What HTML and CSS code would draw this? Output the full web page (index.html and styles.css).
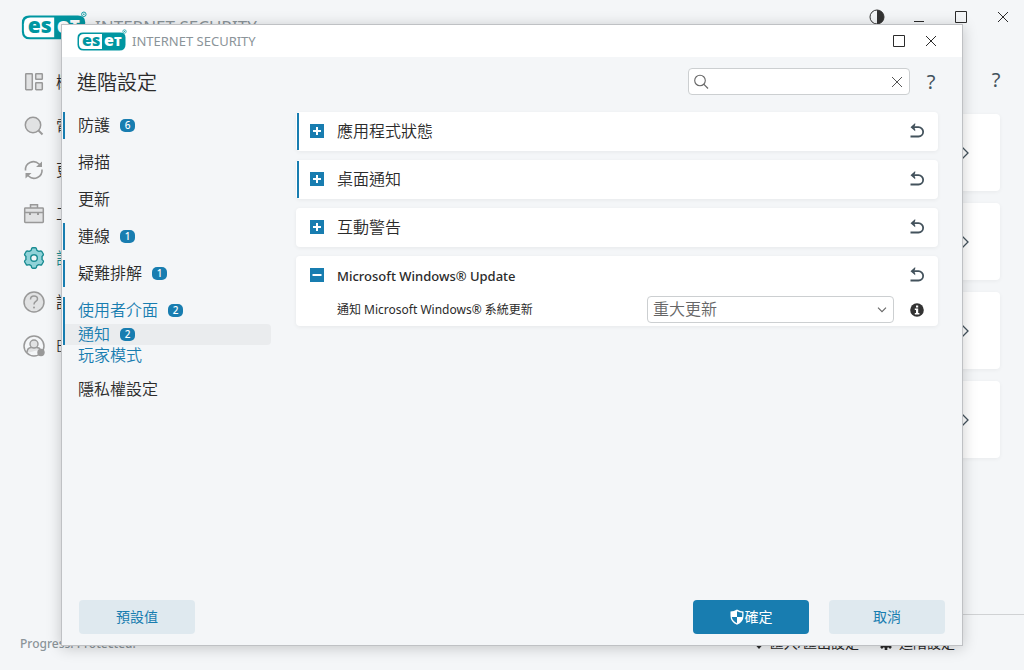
FILE: index.html
```html
<!DOCTYPE html>
<html lang="zh-Hant">
<head>
<meta charset="utf-8">
<meta name="viewport" content="width=device-width, initial-scale=1">
<title>ESET Internet Security</title>
<link rel="stylesheet" href="styles.css">
</head>
<body>
<svg class="defs" aria-hidden="true">
  <symbol id="maximize" viewBox="0 0 12 12"><path d="M.5.5h11v11H.5z" fill="none" stroke="currentColor"/></symbol>
  <symbol id="close" viewBox="0 0 12 12"><path d="M1 1l10 10M11 1L1 11" fill="none" stroke="currentColor"/></symbol>
  <symbol id="undo" viewBox="0 0 16 16"><path d="M3 4.200h6.500a4.600 4.600 0 0 1 0 9.300H1.500" fill="none" stroke="currentColor" stroke-width="1.800"/><path d="M1.500 4.200L6.200 0v2L5 4.200l1.200 2v2z" fill="currentColor"/></symbol>
  <symbol id="plus" viewBox="0 0 14 14"><path d="M0 0h14v14H0z" fill="#187db0"/><path d="M7 3v8M3 7h8" stroke="#fff" stroke-width="2"/></symbol>
  <symbol id="minus" viewBox="0 0 14 14"><path d="M0 0h14v14H0z" fill="#187db0"/><path d="M2.500 7h9" stroke="#fff" stroke-width="2"/></symbol>
  <symbol id="chevron" viewBox="0 0 10 16"><path d="M1 1l7 7-7 7" fill="none" stroke="currentColor" stroke-width="1.300"/></symbol>
</svg>

<div class="window">
  <header class="window-head">
    <div class="brand brand-large">
      <svg class="logo" viewBox="0 0 52 22" role="img" aria-label="ESET">
        <path d="M6 3.500H43Q48.500 3.500 48.500 8.500V15.500Q48.500 21.500 42.500 21.500H6.500Q0.500 21.500 0.500 15.500V9Q0.500 3.500 6 3.500Z" fill="#0096a1"/>
        <path d="M7 5H25V20H7Q2 20 2 15V10Q2 5 7 5Z" fill="#fff"/>
        <text x="5" y="17" class="logo-text" fill="#0096a1">es</text>
        <text x="27" y="17" class="logo-text" fill="#fff">e<tspan class="logo-cap">T</tspan></text>
        <circle cx="47.500" cy="2.500" r="1.700" fill="none" stroke="#0096a1" stroke-width=".7"/>
        <circle cx="47.500" cy="2.500" r=".6" fill="#0096a1"/>
      </svg>
      <span>INTERNET SECURITY</span>
    </div>
    <div class="controls">
      <button type="button" aria-label="對比"><svg class="icon-16" viewBox="0 0 16 16"><circle cx="8" cy="8" r="7" fill="none" stroke="#333"/><path d="M8 1a7 7 0 0 1 0 14z" fill="#333"/></svg></button>
      <button type="button" aria-label="最小化"><svg class="icon-12" viewBox="0 0 12 12"><path d="M1 10.500h10" stroke="currentColor"/></svg></button>
      <button type="button" aria-label="最大化"><svg class="icon-12"><use href="#maximize"/></svg></button>
      <button type="button" aria-label="關閉"><svg class="icon-12"><use href="#close"/></svg></button>
    </div>
  </header>
  <div class="window-main">
    <div class="side">
      <nav class="main-nav" aria-label="主功能表">
        <a href="#"><svg class="nav-icon" viewBox="0 0 24 24"><g fill="#e1e2e3" stroke="#999" stroke-width="1.500"><rect x="3.700" y="3.700" width="6.600" height="16" rx=".6"/><rect x="13.700" y="3.700" width="6.600" height="5.600" rx=".6"/><rect x="13.700" y="12.700" width="6.600" height="7" rx=".6"/></g></svg>概觀</a>
        <a href="#"><svg class="nav-icon" viewBox="0 0 24 24"><circle cx="11" cy="11" r="7.700" fill="#e1e2e3" stroke="#999" stroke-width="1.500"/><path d="M16.500 16.500l4 4" stroke="#999" stroke-width="2"/></svg>電腦掃描</a>
        <a href="#"><svg class="nav-icon" viewBox="0 0 24 24"><g fill="none" stroke="#999" stroke-width="1.600"><path d="M3.500 12.500a8 8 0 0 1 13.500-6.500l2 2"/><path d="M20 11.500a8 8 0 0 1-13.500 6.500l-2-2"/></g><path d="M20 3.500v5.500h-6zM3.500 20.500V15h6z" fill="#999"/></svg>更新</a>
        <a href="#"><svg class="nav-icon" viewBox="0 0 24 24"><g fill="#e1e2e3" stroke="#999" stroke-width="1.500"><path d="M8.500 6V2.700h7V6"/><rect x="2.700" y="6" width="18.600" height="14.500" rx=".7"/><path d="M3 10.500h18"/></g><path d="M7 11h2v2H7zM15 11h2v2h-2z" fill="#999"/></svg>工具</a>
        <a href="#" class="current"><svg class="nav-icon" viewBox="0 0 24 24"><path d="M9.200 4.200Q9.500 1.800 10.500 1.800h3q1 0 1.300 2.400 1 .7 2 1.100 2.300-.8 3 .2l1.500 2.500q.5 1-1.300 2.500.2 1.500 0 3 1.800 1.500 1.300 2.500l-1.500 2.500q-.7 1-3 .2-1 .4-2 1.100-.3 2.400-1.300 2.400h-3q-1 0-1.300-2.400-1-.7-2-1.100-2.300.8-3-.2l-1.500-2.500q-.5-1 1.300-2.500-.2-1.500 0-3Q2.200 9 2.700 8l1.500-2.500q.7-1 3-.2 1-.4 2-1.100z" fill="#90d2d8" stroke="#1a8c92" stroke-width="1.400" stroke-linejoin="round"/><circle cx="12" cy="12" r="3.300" fill="#f4f6f8" stroke="#1a8c92" stroke-width="1.400"/></svg>設定</a>
        <a href="#"><svg class="nav-icon" viewBox="0 0 24 24"><circle cx="12" cy="12" r="10" fill="#e1e2e3" stroke="#999" stroke-width="1.500"/><path d="M8.500 9.500q0-3.500 3.500-3.500t3.500 3q0 1.500-2 2.700Q12 12.700 12 14.500" fill="none" stroke="#999" stroke-width="1.500"/><circle cx="12" cy="17.500" r="1" fill="#999"/></svg>說明及支援</a>
        <a href="#"><svg class="nav-icon" viewBox="0 0 24 24"><circle cx="12" cy="12" r="10" fill="#f4f6f8" stroke="#999" stroke-width="1.500"/><g fill="#e1e2e3" stroke="#999" stroke-width="1.400"><path d="M5 19q0-5.500 4.500-5.500h5q3 0 4 2"/><circle cx="12" cy="10" r="4"/></g><circle cx="19" cy="18.500" r="3.700" fill="#999"/></svg>ESET HOME 帳戶</a>
      </nav>
      <p class="slogan">Progress. Protected.</p>
    </div>
    <div class="content">
      <a class="help" href="#" aria-label="說明">?</a>
      <div class="tiles">
        <button type="button" class="tile" aria-label="電腦防護"><svg><use href="#chevron"/></svg></button>
        <button type="button" class="tile" aria-label="網際網路防護"><svg><use href="#chevron"/></svg></button>
        <button type="button" class="tile" aria-label="網路防護"><svg><use href="#chevron"/></svg></button>
        <button type="button" class="tile" aria-label="安全性工具"><svg><use href="#chevron"/></svg></button>
      </div>
      <footer class="window-foot">
        <a href="#"><svg class="icon-14" viewBox="0 0 14 14"><path d="M4 10V3M9 1v9" stroke="currentColor" stroke-width="1.500"/><path d="M4 0l3 4H1zM9 13L5.500 9h7z" fill="currentColor"/></svg>匯入/匯出設定</a>
        <a href="#"><svg class="icon-14" viewBox="0 0 14 14"><circle cx="7" cy="7" r="3.500" fill="none" stroke="currentColor" stroke-width="3"/><path d="M7 0v3M7 11v3M0 7h3M11 7h3M2 2l2 2M10 10l2 2M12 2l-2 2M4 10l-2 2" stroke="currentColor" stroke-width="2.600"/></svg>進階設定</a>
      </footer>
    </div>
  </div>
</div>

<section class="dialog" role="dialog" aria-labelledby="dialog-title">
  <header class="titlebar">
    <div class="brand">
      <svg class="logo" viewBox="0 0 52 22" role="img" aria-label="ESET">
        <path d="M6 3.500H43Q48.500 3.500 48.500 8.500V15.500Q48.500 21.500 42.500 21.500H6.500Q0.500 21.500 0.500 15.500V9Q0.500 3.500 6 3.500Z" fill="#0096a1"/>
        <path d="M7 5H25V20H7Q2 20 2 15V10Q2 5 7 5Z" fill="#fff"/>
        <text x="5" y="17" class="logo-text" fill="#0096a1">es</text>
        <text x="27" y="17" class="logo-text" fill="#fff">e<tspan class="logo-cap">T</tspan></text>
        <circle cx="47.500" cy="2.500" r="1.700" fill="none" stroke="#0096a1" stroke-width=".7"/>
        <circle cx="47.500" cy="2.500" r=".6" fill="#0096a1"/>
      </svg>
      <span>INTERNET SECURITY</span>
    </div>
    <div class="controls">
      <button type="button" aria-label="最大化"><svg class="icon-12"><use href="#maximize"/></svg></button>
      <button type="button" aria-label="關閉"><svg class="icon-12"><use href="#close"/></svg></button>
    </div>
  </header>
  <div class="dialog-head">
    <h1 id="dialog-title">進階設定</h1>
    <div class="search">
      <svg class="icon-16" viewBox="0 0 16 16"><circle cx="7" cy="6.500" r="5.300" fill="none" stroke="#666" stroke-width="1.100"/><path d="M10.700 10.200l4.300 4.300" stroke="#666" stroke-width="1.200"/></svg>
      <input type="text" aria-label="搜尋">
      <button type="button" aria-label="清除"><svg class="icon-12"><use href="#close"/></svg></button>
    </div>
    <a class="help" href="#" aria-label="說明">?</a>
  </div>
  <div class="dialog-body">
    <nav class="tree" aria-label="設定分類">
      <a class="changed" href="#">防護<span class="badge">6</span></a>
      <a href="#">掃描</a>
      <a href="#">更新</a>
      <a class="changed" href="#">連線<span class="badge">1</span></a>
      <a class="changed" href="#">疑難排解<span class="badge">1</span></a>
      <div class="group">
        <a class="changed" href="#">使用者介面<span class="badge">2</span></a>
        <a class="sub changed selected" href="#" aria-current="page">通知<span class="badge">2</span></a>
        <a class="sub" href="#">玩家模式</a>
      </div>
      <a href="#">隱私權設定</a>
    </nav>
    <main class="panels">
      <section class="panel marked"><div class="panel-row">
        <button type="button" aria-label="展開"><svg class="icon-14"><use href="#plus"/></svg></button><h2>應用程式狀態</h2>
        <button type="button" aria-label="還原"><svg class="icon-16"><use href="#undo"/></svg></button></div></section>
      <section class="panel marked"><div class="panel-row">
        <button type="button" aria-label="展開"><svg class="icon-14"><use href="#plus"/></svg></button><h2>桌面通知</h2>
        <button type="button" aria-label="還原"><svg class="icon-16"><use href="#undo"/></svg></button></div></section>
      <section class="panel"><div class="panel-row">
        <button type="button" aria-label="展開"><svg class="icon-14"><use href="#plus"/></svg></button><h2>互動警告</h2>
        <button type="button" aria-label="還原"><svg class="icon-16"><use href="#undo"/></svg></button></div></section>
      <section class="panel"><div class="panel-row">
        <button type="button" aria-label="收合"><svg class="icon-14"><use href="#minus"/></svg></button><h2 class="latin">Microsoft Windows® Update</h2>
        <button type="button" aria-label="還原"><svg class="icon-16"><use href="#undo"/></svg></button></div>
        <div class="setting">
          <label for="update-level">通知 Microsoft Windows® 系統更新</label>
          <div class="select">
            <select id="update-level"><option>重大更新</option></select>
            <svg viewBox="0 0 10 6"><path d="M1 .7l4 4 4-4" fill="none" stroke="#666" stroke-width="1.100"/></svg>
          </div>
          <button type="button" aria-label="資訊"><svg class="icon-14" viewBox="0 0 14 14"><circle cx="7" cy="7" r="6.800" fill="#333"/><path d="M6 2.500h2.200v2H6zM4.800 5.500h3.400v4.500h1.200v1.500H4.800V10H6V7H4.800z" fill="#fff"/></svg></button>
        </div>
      </section>
    </main>
  </div>
  <footer class="actions">
    <button type="button" class="btn">預設值</button>
    <div class="actions-end">
      <button type="button" class="btn primary"><svg class="icon-14" viewBox="0 0 14 16"><path d="M7 .5Q10 2.500 13.500 2.500V7q0 6-6.500 8.700Q.5 13 .5 7V2.500Q4 2.500 7 .5z" fill="#fff"/><path d="M7 2.200Q9.500 3.600 12.200 3.800V8H7zM1.800 8H7v6.200Q2.500 12 1.800 8z" fill="#187db0"/></svg>確定</button>
      <button type="button" class="btn">取消</button>
    </div>
  </footer>
</section>
</body>
</html>
```
FILE: styles.css
```css
* { box-sizing: border-box; }

body {
  margin: 0;
  position: relative;
  min-height: 100vh;
  display: flex;
  background: #f4f6f8;
  color: #2b2b2b;
  font-family: "Noto Sans", "Noto Sans CJK TC", sans-serif;
  font-size: 16px;
  font-weight: 350;
  line-height: 20px;
}

h1, h2, p { margin: 0; font-weight: 350; }
a { color: inherit; text-decoration: none; }
svg { display: block; flex: none; }
button {
  display: flex;
  align-items: center;
  justify-content: center;
  padding: 0;
  border: 0;
  background: none;
  color: inherit;
  font: inherit;
}

.defs { position: absolute; width: 0; height: 0; }
.icon-12 { width: 12px; height: 12px; }
.icon-14 { width: 14px; height: 14px; }
.icon-16 { width: 16px; height: 16px; }

.brand {
  display: flex;
  align-items: center;
  gap: 3px;
  color: #8b9499;
  font-size: 13px;
  font-weight: 400;
}
.brand .logo { width: 52px; height: 22px; margin-top: -2px; }
.brand-large { gap: 5px; font-size: 17px; }
.brand-large .logo { width: 69px; height: 29px; }
.logo-text { font: 900 16px "Noto Sans", sans-serif; }
.logo-cap { font-size: 13px; }

.help { color: #43525c; font-size: 20px; font-weight: 400; text-align: center; }

/* Main window */
.window { flex: 1; display: flex; flex-direction: column; }
.window-head {
  display: flex;
  align-items: flex-start;
  justify-content: space-between;
  height: 60px;
  padding: 13px 0 0 21px;
}
.window-head .controls { display: flex; margin-top: -6px; }
.window-head .controls button { width: 42px; height: 20px; }
.window-main { flex: 1; display: flex; }
.side {
  width: 220px;
  display: flex;
  flex-direction: column;
  justify-content: space-between;
  padding-bottom: 16px;
}
.main-nav a {
  display: flex;
  align-items: center;
  gap: 10px;
  height: 44px;
  padding-left: 22px;
}
.main-nav .current { color: #1a8c92; }
.nav-icon { width: 24px; height: 24px; }
.slogan { padding-left: 20px; color: #8b9499; font-size: 12px; font-weight: 500; }
.content { flex: 1; display: flex; flex-direction: column; }
.content .help { align-self: flex-end; width: 20px; height: 54px; margin-right: 18px; padding-top: 10px; }
.tiles { flex: 1; display: flex; flex-direction: column; gap: 12px; padding-right: 24px; }
.tile {
  justify-content: flex-end;
  height: 77px;
  padding-right: 30px;
  border-radius: 4px;
  background: #fff;
  color: #43525c;
  box-shadow: 0 1px 4px rgba(0, 0, 0, .05);
}
.tile svg { width: 10px; height: 16px; }
.window-foot {
  display: flex;
  align-items: center;
  justify-content: flex-end;
  gap: 20px;
  height: 56px;
  padding-right: 69px;
  border-top: 1px solid #d0d2d4;
  font-size: 14px;
  font-weight: 400;
}
.window-foot a { display: flex; align-items: center; gap: 6px; }

/* Settings dialog lying over the main window */
.dialog {
  position: absolute;
  inset: 24px 61px;
  display: flex;
  flex-direction: column;
  border: 1px solid #bfc1c4;
  background: #f4f6f8;
  box-shadow: 0 2px 14px rgba(0, 0, 0, .2);
}
.titlebar {
  display: flex;
  align-items: center;
  justify-content: space-between;
  height: 32px;
  padding: 0 15px;
  background: #fff;
}
.titlebar .controls { display: flex; }
.titlebar .controls button { width: 32px; height: 32px; }
.dialog-head {
  display: flex;
  align-items: center;
  height: 55px;
  padding: 0 19px 6px 15px;
}
h1 { flex: 1; padding-top: 2px; font-size: 20px; line-height: 28px; }
.search {
  display: flex;
  align-items: center;
  width: 222px;
  height: 27px;
  padding: 0 6px 0 4px;
  border: 1px solid #cccfd1;
  border-radius: 4px;
  background: #fff;
  color: #555;
}
.search input {
  flex: 1;
  min-width: 0;
  border: 0;
  outline: 0;
  background: none;
  font: inherit;
}
.dialog-head .help { width: 24px; margin-left: 9px; }

.dialog-body { flex: 1; display: flex; }
.tree { display: flex; flex-direction: column; gap: 10px; width: 234px; }
.tree a {
  display: flex;
  align-items: center;
  gap: 10px;
  height: 27px;
  margin: 0 25px 0 1px;
  padding: 0 0 2px 13px;
  border-left: 2px solid transparent;
}
.tree .changed { border-left-color: #187db0; }
.group { color: #187db0; }
.tree .sub { height: 21px; }
.tree .selected { border-radius: 0 4px 4px 0; background: #eaecee; }
.badge {
  min-width: 15px;
  height: 13px;
  margin-top: 2px;
  border-radius: 5px;
  background: #187db0;
  color: #fff;
  font-size: 10px;
  font-weight: 500;
  line-height: 13px;
  text-align: center;
}

.panels { flex: 1; display: flex; flex-direction: column; gap: 9px; padding-right: 24px; }
.panel {
  border-radius: 4px;
  background: #fff;
  box-shadow: 0 1px 4px rgba(0, 0, 0, .06);
}
.panel-row { display: flex; align-items: center; height: 39px; padding: 0 13px 2px 14px; }
.marked { padding: 1px 0 1px 1px; }
.marked .panel-row {
  height: 37px;
  padding-left: 11px;
  border-left: 2px solid #187db0;
}
h2 { flex: 1; padding-left: 13px; font-size: 16px; line-height: 20px; }
.latin { padding-top: 2px; font-size: 13px; font-weight: 500; }
.panel button { color: #43525c; }
.setting {
  display: flex;
  align-items: center;
  gap: 16px;
  padding: 1px 14px 3px 41px;
  font-size: 12px;
  font-weight: 400;
}
.setting label { flex: 1; }
.select { display: grid; align-items: center; width: 247px; height: 27px; }
.select > * { grid-area: 1 / 1; }
.select select {
  width: 100%;
  height: 27px;
  padding: 0 5px 2px;
  border: 1px solid #cccfd1;
  border-radius: 4px;
  appearance: none;
  background: #fff;
  color: #666;
  font: inherit;
  font-size: 16px;
  font-weight: 350;
}
.select svg { justify-self: end; width: 10px; height: 6px; margin-right: 7px; pointer-events: none; }

.actions {
  display: flex;
  justify-content: space-between;
  padding: 0 17px 11px;
}
.actions-end { display: flex; gap: 20px; }
.btn {
  width: 116px;
  height: 34px;
  border-radius: 4px;
  background: #dfe9ef;
  color: #187db0;
  font-size: 14px;
  font-weight: 400;
}
.primary { gap: 1px; background: #187db0; color: #fff; }
.primary svg { height: 16px; }
```
